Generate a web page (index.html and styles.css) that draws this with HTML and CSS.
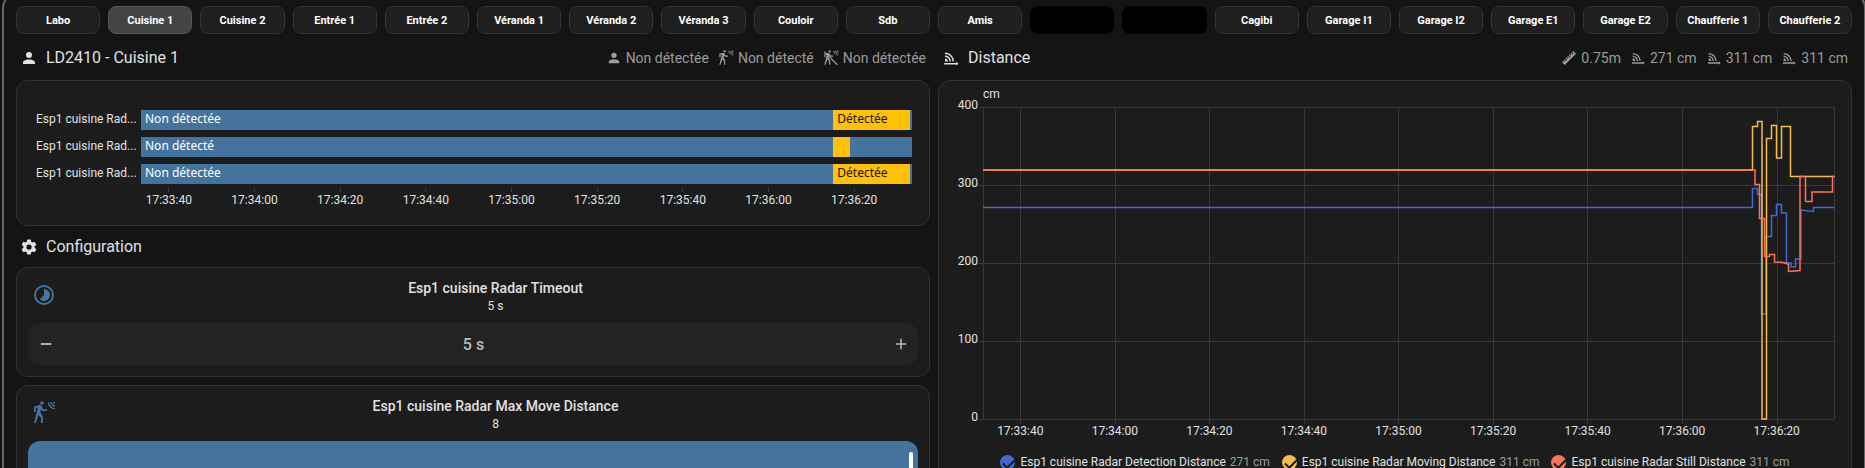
FILE: index.html
```html
<!DOCTYPE html>
<html lang="fr">
<head>
    <meta charset="UTF-8">
    <meta name="viewport" content="width=device-width, initial-scale=1.0">
    <title>LD2410 - Cuisine 1</title>
    <link rel="stylesheet" href="styles.css">
</head>
<body>
    <svg class="sprite" aria-hidden="true">
        <symbol id="account" viewBox="0 0 24 24"><path d="M12 4A4 4 0 0 1 16 8A4 4 0 0 1 12 12A4 4 0 0 1 8 8A4 4 0 0 1 12 4M12 14C16.42 14 20 15.79 20 18V20H4V18C4 15.79 7.58 14 12 14Z"/></symbol>
        <symbol id="motion" viewBox="0 0 24 24"><path d="M10 .2C9 .2 8.2 1 8.2 2S9 3.8 10 3.8C11 3.8 11.8 3 11.8 2S11 .2 10 .2M15.67 1A7.33 7.33 0 0 0 23 8.33V7A6 6 0 0 1 17 1H15.67M18.33 1C18.33 3.58 20.42 5.67 23 5.67V4.33C21.16 4.33 19.67 2.84 19.67 1H18.33M21 1A2 2 0 0 0 23 3V1H21M7.92 4.03C7.75 4.03 7.58 4.06 7.42 4.11L2 5.8V11H3.8V7.33L5.91 6.67L2 22H3.8L6.67 13.89L9 17V22H10.8V15.59L8.31 11.05L9.04 8.18L10.12 10H15V8.2H11.38L9.38 4.87C9.08 4.37 8.54 4.03 7.92 4.03Z"/></symbol>
        <symbol id="motion-off" viewBox="0 0 24 24">
            <mask id="slash"><path fill="#fff" d="M0 0H24V24H0Z"/><path stroke="#000" stroke-width="2" d="M2.5 0L24 21.5"/></mask>
            <g mask="url(#slash)"><use href="#motion" width="24" height="24"/></g>
            <path d="M2.4 1.7L1.1 3L20.8 22.7L22.1 21.4Z"/>
        </symbol>
        <symbol id="distance" viewBox="0 0 24 24"><path d="M4 4.5V6.5C9.5 6.5 14 11 14 16.5H16C16 9.9 10.6 4.5 4 4.5M4 8.5V10.5C7.3 10.5 10 13.2 10 16.5H12C12 12.1 8.4 8.5 4 8.5M4 12.5V16.5H8C8 14.3 6.2 12.5 4 12.5M19 17V18.5H3V20.5H19V22L22 19.5L19 17Z"/></symbol>
        <symbol id="ruler" viewBox="0 0 24 24"><path d="M1.39 18.36L3.16 16.6L4.58 18L5.64 16.95L4.22 15.54L5.64 14.12L8.11 16.6L9.17 15.54L6.7 13.06L8.11 11.65L9.53 13.06L10.59 12L9.17 10.59L10.59 9.17L13.06 11.65L14.12 10.59L11.65 8.11L13.06 6.7L14.47 8.11L15.54 7.05L14.12 5.64L15.54 4.22L18 6.7L19.07 5.64L16.6 3.16L18.36 1.39L22.61 5.64L5.64 22.61L1.39 18.36Z"/></symbol>
        <symbol id="cog" viewBox="0 0 24 24"><path d="M12 15.5A3.5 3.5 0 0 1 8.5 12A3.5 3.5 0 0 1 12 8.5A3.5 3.5 0 0 1 15.5 12A3.5 3.5 0 0 1 12 15.5M19.43 12.97C19.47 12.65 19.5 12.33 19.5 12C19.5 11.67 19.47 11.34 19.43 11L21.54 9.37C21.73 9.22 21.78 8.95 21.66 8.73L19.66 5.27C19.54 5.05 19.27 4.96 19.05 5.05L16.56 6.05C16.04 5.66 15.5 5.32 14.87 5.07L14.5 2.42C14.46 2.18 14.25 2 14 2H10C9.75 2 9.54 2.18 9.5 2.42L9.13 5.07C8.5 5.32 7.96 5.66 7.44 6.05L4.95 5.05C4.73 4.96 4.46 5.05 4.34 5.27L2.34 8.73C2.21 8.95 2.27 9.22 2.46 9.37L4.57 11C4.53 11.34 4.5 11.67 4.5 12C4.5 12.33 4.53 12.65 4.57 12.97L2.46 14.63C2.27 14.78 2.21 15.05 2.34 15.27L4.34 18.73C4.46 18.95 4.73 19.03 4.95 18.95L7.44 17.94C7.96 18.34 8.5 18.68 9.13 18.93L9.5 21.58C9.54 21.82 9.75 22 10 22H14C14.25 22 14.46 21.82 14.5 21.58L14.87 18.93C15.5 18.67 16.04 18.34 16.56 17.94L19.05 18.95C19.27 19.03 19.54 18.95 19.66 18.73L21.66 15.27C21.78 15.05 21.73 14.78 21.54 14.63L19.43 12.97Z"/></symbol>
        <symbol id="timelapse" viewBox="0 0 24 24"><path d="M16.24 7.75C15.07 6.58 13.53 6 12 6V12L7.76 16.24C10.1 18.58 13.9 18.58 16.24 16.24C18.59 13.9 18.59 10.1 16.24 7.75M12 2A10 10 0 0 0 2 12A10 10 0 0 0 12 22A10 10 0 0 0 22 12A10 10 0 0 0 12 2M12 20A8 8 0 0 1 4 12A8 8 0 0 1 12 4A8 8 0 0 1 20 12A8 8 0 0 1 12 20Z"/></symbol>
        <symbol id="minus" viewBox="0 0 24 24"><path d="M19 13H5V11H19V13Z"/></symbol>
        <symbol id="plus" viewBox="0 0 24 24"><path d="M19 13H13V19H11V13H5V11H11V5H13V11H19V13Z"/></symbol>
    </svg>

    <main class="dialog">
        <nav class="tabs">
            <button>Labo</button>
            <button class="active">Cuisine 1</button>
            <button>Cuisine 2</button>
            <button>Entrée 1</button>
            <button>Entrée 2</button>
            <button>Véranda 1</button>
            <button>Véranda 2</button>
            <button>Véranda 3</button>
            <button>Couloir</button>
            <button>Sdb</button>
            <button>Amis</button>
            <button class="hidden-room" aria-label="Masqué"></button>
            <button class="hidden-room" aria-label="Masqué"></button>
            <button>Cagibi</button>
            <button>Garage I1</button>
            <button>Garage I2</button>
            <button>Garage E1</button>
            <button>Garage E2</button>
            <button>Chaufferie 1</button>
            <button>Chaufferie 2</button>
        </nav>

        <div class="columns">
            <section class="column">
                <header class="heading with-badges">
                    <svg class="icon"><use href="#account"/></svg>
                    <h2>LD2410 - Cuisine 1</h2>
                    <div class="badges">
                        <span class="badge"><svg><use href="#account"/></svg>Non détectée</span>
                        <span class="badge"><svg><use href="#motion"/></svg>Non détecté</span>
                        <span class="badge"><svg><use href="#motion-off"/></svg>Non détectée</span>
                    </div>
                </header>

                <div class="card timeline">
                    <div class="row">
                        <span class="name">Esp1 cuisine Rad...</span>
                        <div class="track">
                            <span class="off" style="width: 89.8%">Non détectée</span>
                            <span class="on" style="width: 9.9%">Détectée</span>
                            <span class="off rest"></span>
                        </div>
                    </div>
                    <div class="row">
                        <span class="name">Esp1 cuisine Rad...</span>
                        <div class="track">
                            <span class="off" style="width: 89.8%">Non détecté</span>
                            <span class="on" style="width: 2.1%"></span>
                            <span class="off rest"></span>
                        </div>
                    </div>
                    <div class="row">
                        <span class="name">Esp1 cuisine Rad...</span>
                        <div class="track">
                            <span class="off" style="width: 89.8%">Non détectée</span>
                            <span class="on" style="width: 9.9%">Détectée</span>
                            <span class="off rest"></span>
                        </div>
                    </div>
                    <div class="times">
                        <span>17:33:40</span>
                        <span>17:34:00</span>
                        <span>17:34:20</span>
                        <span>17:34:40</span>
                        <span>17:35:00</span>
                        <span>17:35:20</span>
                        <span>17:35:40</span>
                        <span>17:36:00</span>
                        <span>17:36:20</span>
                    </div>
                </div>

                <header class="heading">
                    <svg class="icon"><use href="#cog"/></svg>
                    <h2>Configuration</h2>
                </header>

                <div class="card tile">
                    <div class="info">
                        <svg><use href="#timelapse"/></svg>
                        <div class="text">
                            <h3>Esp1 cuisine Radar Timeout</h3>
                            <p>5 s</p>
                        </div>
                    </div>
                    <div class="stepper">
                        <button aria-label="Diminuer"><svg><use href="#minus"/></svg></button>
                        <output>5 s</output>
                        <button class="plus" aria-label="Augmenter"><svg><use href="#plus"/></svg></button>
                    </div>
                </div>

                <div class="card tile">
                    <div class="info">
                        <svg><use href="#motion"/></svg>
                        <div class="text">
                            <h3><label for="max-move">Esp1 cuisine Radar Max Move Distance</label></h3>
                            <p>8</p>
                        </div>
                    </div>
                    <input class="slider" id="max-move" type="range" min="0" max="8" value="8">
                </div>
            </section>

            <section class="column">
                <header class="heading with-badges">
                    <svg class="icon"><use href="#distance"/></svg>
                    <h2>Distance</h2>
                    <div class="badges">
                        <span class="badge"><svg><use href="#ruler"/></svg>0.75m</span>
                        <span class="badge"><svg><use href="#distance"/></svg>271 cm</span>
                        <span class="badge"><svg><use href="#distance"/></svg>311 cm</span>
                        <span class="badge"><svg><use href="#distance"/></svg>311 cm</span>
                    </div>
                </header>

                <div class="card chart">
                    <div class="unit">cm</div>
                    <div class="plot">
                        <div class="values">
                            <span>400</span>
                            <span>300</span>
                            <span>200</span>
                            <span>100</span>
                            <span>0</span>
                        </div>
                        <svg class="lines" viewBox="0 0 851 312" preserveAspectRatio="none">
                            <path class="grid" d="M-5 .5H851M-5 78.5H851M-5 156.5H851M-5 234.5H851M-5 312.5H851M.5 0V312M37.5 0V317M132.5 0V317M226.5 0V317M321.5 0V317M415.5 0V317M510.5 0V317M604.5 0V317M699.5 0V317M794.5 0V317M851.5 0V312"/>
                            <path class="detection" d="M0 100.5H769.5V81.5H774.5V87.5H778.5V207H783V129.5H788.5V108.5H793.5V97.5H798.5V106H803.5V156H808V160H812.5V152H818V103L830.5 104.5V100.5H851.5"/>
                            <path class="moving" d="M0 63H769.5V19.5H774.5V14.5H779V312H783.5V31.5H788.5V18.5H793.5V51H798.5V19.5H807.5V69.5H851.5"/>
                            <path class="still" d="M0 63H772V77.5H776.5V111.5H781.5V149.5H786.5V147.5H791.5V155Q801 155 805.5 157.5V164.5L817 163.5V69.5H822.5V94.5H829V85H849.5V69.5H851.5"/>
                        </svg>
                    </div>
                    <div class="times">
                        <span>17:33:40</span>
                        <span>17:34:00</span>
                        <span>17:34:20</span>
                        <span>17:34:40</span>
                        <span>17:35:00</span>
                        <span>17:35:20</span>
                        <span>17:35:40</span>
                        <span>17:36:00</span>
                        <span>17:36:20</span>
                    </div>
                    <div class="legend">
                        <label><input class="blue" type="checkbox" checked>Esp1 cuisine Radar Detection Distance <span>271 cm</span></label>
                        <label><input class="yellow" type="checkbox" checked>Esp1 cuisine Radar Moving Distance <span>311 cm</span></label>
                        <label><input class="red" type="checkbox" checked>Esp1 cuisine Radar Still Distance <span>311 cm</span></label>
                    </div>
                </div>
            </section>
        </div>
    </main>
</body>
</html>
```
FILE: styles.css
```css
* {
    box-sizing: border-box;
}

body {
    margin: 0;
    height: 100vh;
    overflow: hidden;
    background: #111;
    color: #e1e1e1;
    font-family: Roboto, "Noto Sans", sans-serif;
    font-size: 12px;
}

h2, h3, p {
    margin: 0;
    font-weight: 400;
}

svg {
    fill: currentColor;
    flex: none;
}

.sprite {
    display: none;
}

.dialog {
    height: calc(100vh + 8px);
    margin: -8px -1px 0 2px;
    padding: 12px 12px 0;
    border: 2px solid #666;
    border-bottom: none;
    border-radius: 16px 16px 0 0;
    background: #141414;
    overflow: hidden;
}

.tabs {
    display: grid;
    grid-template-columns: repeat(20, 1fr);
    gap: 8px;
    margin-bottom: 8px;
}

.tabs button {
    height: 28px;
    padding: 0;
    border: 1px solid #333;
    border-radius: 8px;
    background: #1f1f1f;
    color: #fff;
    font: bold 11px Roboto, sans-serif;
    white-space: nowrap;
}

.tabs .active {
    background: #444;
    border-color: #555;
}

.tabs .hidden-room {
    background: #000;
    border-color: #000;
}

.columns {
    display: grid;
    grid-template-columns: 1fr 1fr;
    gap: 8px;
    align-items: start;
}

.column {
    display: flex;
    flex-direction: column;
    gap: 8px;
    min-width: 0;
}

.heading {
    display: flex;
    align-items: center;
    gap: 8px;
    height: 25px;
    padding: 0 4px;
}

.with-badges {
    height: 30px;
    padding-top: 2px;
}

.heading h2 {
    font-size: 16px;
    line-height: 24px;
}

.icon {
    width: 18px;
    height: 18px;
}

.badges {
    display: flex;
    gap: 9px;
    margin-left: auto;
}

.badge {
    display: flex;
    align-items: center;
    gap: 4px;
    color: #9b9b9b;
    font-size: 14px;
    line-height: 20px;
}

.badge svg {
    width: 16px;
    height: 16px;
}

.card {
    border: 1px solid #333;
    border-radius: 12px;
    background: #1c1c1c;
}

/* history bars */
.timeline {
    padding: 29px 17px 17px 19px;
}

.row {
    display: flex;
    margin-bottom: 7px;
    line-height: 18px;
}

.name {
    width: 100px;
    margin-right: 5px;
    white-space: nowrap;
}

.track {
    display: flex;
    flex: 1;
    height: 20px;
    font-family: "Noto Sans", sans-serif;
}

.track span {
    padding-left: 4px;
    white-space: nowrap;
}

.off {
    background: #44739e;
    color: #fff;
}

.on {
    background: #ffc107;
    color: #141414;
}

.track .rest {
    flex: 1;
    padding: 0;
}

.times {
    display: grid;
    grid-template-columns: repeat(9, 1fr);
    line-height: 16px;
    text-align: center;
}

.timeline .times {
    margin: -4px 15px 0 90px;
}

.timeline .times span::before {
    content: "";
    display: block;
    width: 1px;
    height: 5px;
    margin: 0 auto;
    background: #383838;
}

/* tiles */
.tile {
    padding: 0 11px 11px;
}

.info {
    display: flex;
    align-items: center;
    height: 55px;
    color: #44739e;
}

.info svg {
    width: 24px;
    height: 24px;
    margin: 0 17px 2px 4px;
}

.text {
    flex: 1;
    color: #e1e1e1;
    text-align: center;
}

.text h3 {
    font-size: 14px;
    font-weight: 500;
    line-height: 20px;
}

.text p {
    line-height: 16px;
}

.stepper {
    display: flex;
    align-items: center;
    justify-content: space-between;
    height: 42px;
    padding: 0 8px 0 9px;
    border-radius: 12px;
    background: #232323;
}

.stepper button {
    display: flex;
    padding: 0;
    border: none;
    background: none;
    color: #e1e1e1;
}

.stepper .plus {
    color: #bbb;
}

.stepper svg {
    width: 18px;
    height: 18px;
}

.stepper output {
    color: #bbb;
    font-size: 16px;
    font-weight: 500;
}

.slider {
    appearance: none;
    display: block;
    width: 100%;
    height: 42px;
    margin: 0;
    padding: 0 5px;
    border-radius: 12px;
    background: #44739e;
}

.slider::-webkit-slider-thumb {
    appearance: none;
    width: 4px;
    height: 20px;
    border-radius: 2px;
    background: #fff;
}

/* distance chart */
.chart {
    padding: 5px 17px 12px;
}

.unit {
    margin-left: 27px;
    line-height: 16px;
}

.plot {
    display: flex;
    gap: 5px;
    margin-top: 5px;
}

.values {
    display: flex;
    flex-direction: column;
    justify-content: space-between;
    width: 22px;
    margin: -10px 0 -6px;
    line-height: 16px;
    text-align: right;
}

.lines {
    flex: 1;
    min-width: 0;
    height: 312px;
    overflow: visible;
}

.lines path {
    fill: none;
    stroke-width: 1.5;
    vector-effect: non-scaling-stroke;
}

.lines .grid {
    stroke: #383838;
    stroke-width: 1;
    shape-rendering: crispEdges;
}

.lines .detection {
    stroke: #4269d0;
}

.lines .moving {
    stroke: #f4bd4a;
}

.lines .still {
    stroke: #ff725c;
}

.chart .times {
    margin: 4px 10px 0 17px;
}

.legend {
    display: flex;
    justify-content: center;
    gap: 12px;
    margin-top: 14px;
    line-height: 18px;
}

.legend label {
    display: flex;
    align-items: center;
    gap: 4px;
}

.legend span {
    color: #9b9b9b;
}

.legend input {
    appearance: none;
    width: 15px;
    height: 15px;
    margin: 0 1px 0 0;
    border-radius: 50%;
}

.legend input::after {
    content: "";
    display: block;
    width: 10px;
    height: 5px;
    margin: 4px 3px;
    border: solid #1c1c1c;
    border-width: 0 0 2px 2px;
    transform: rotate(-45deg);
}

.blue {
    background: #4269d0;
}

.yellow {
    background: #f4bd4a;
}

.red {
    background: #ff725c;
}
```
